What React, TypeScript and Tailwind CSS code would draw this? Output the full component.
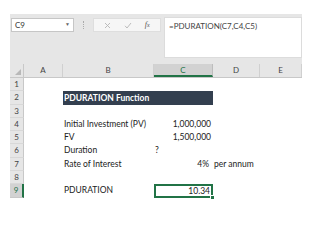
const cols = [
  { name: "A", w: "w-[39px]" },
  { name: "B", w: "w-[91px]" },
  { name: "C", w: "w-[59px]" },
  { name: "D", w: "w-[47px]" },
  { name: "E", w: "w-[42px]" },
];

function Row({ n, children, active }: { n: number; children?: React.ReactNode; active?: boolean }) {
  return (
    <div className="flex h-[13.3px]">
      <div
        className={
          active
            ? "w-[14px] shrink-0 bg-[#d2d2d2] border-r-2 border-[#217346] border-b border-b-[#c8c8c8] text-[8px] leading-[12px] text-center text-[#217346]"
            : "w-[14px] shrink-0 bg-[#e6e6e6] border-r border-[#c8c8c8] border-b border-b-[#d8d8d8] text-[8px] leading-[12px] text-center text-[#444]"
        }
      >
        {n}
      </div>
      <div className="relative flex-1 bg-white whitespace-nowrap">{children}</div>
    </div>
  );
}

export default function App() {
  return (
    <div className="w-[320px] h-[240px] bg-white overflow-hidden pt-[14px] pl-[10px] font-['Lato',sans-serif] text-[#222]">
      <div className="w-[292px] bg-[#e6e6e6]">
        {/* formula bar */}
        <div className="flex items-start h-[50px] pt-[4px]">
          <div className="ml-[1px] w-[63px] h-[14px] bg-white border border-[#c6c6c6] flex items-center justify-between px-[3px]">
            <span className="text-[8px] text-[#333]">C9</span>
            <span className="text-[5px] text-[#666]">▼</span>
          </div>
          <div className="w-[19px] h-[14px] flex items-center justify-center">
            <div className="h-[8px] border-l border-dotted border-[#aaa]" />
          </div>
          <div className="w-[68px] h-[14px] bg-[#f6f6f6] border border-[#dedede] flex items-center justify-around px-[4px]">
            <svg width="7" height="7" viewBox="0 0 7 7">
              <path d="M1 1L6 6M6 1L1 6" stroke="#b5b5b5" strokeWidth="0.9" />
            </svg>
            <svg width="8" height="7" viewBox="0 0 8 7">
              <path d="M1 3.8L3 6L7 1" stroke="#b5b5b5" strokeWidth="0.9" fill="none" />
            </svg>
            <span className="font-['Liberation_Serif',serif] italic text-[8px] text-[#555]">
              f<span className="text-[6px]">x</span>
            </span>
          </div>
          <div className="ml-[3px] flex-1 h-[41px] -mt-[1px] bg-white border border-[#dcdcdc] px-[4px] pt-[2px] text-[8px] text-[#444]">
            =PDURATION(C7,C4,C5)
          </div>
        </div>

        {/* column headers */}
        <div className="flex h-[14px] border-b border-[#c8c8c8]">
          <div className="relative w-[14px] shrink-0 border-r border-[#c8c8c8]">
            <div className="absolute right-[2px] bottom-[2px] w-0 h-0 border-l-[6px] border-l-transparent border-b-[6px] border-b-[#b8b8b8]" />
          </div>
          {cols.map((c) => (
            <div
              key={c.name}
              className={
                c.name === "C"
                  ? `${c.w} shrink-0 bg-[#d2d2d2] border-r border-[#bdbdbd] border-b-2 border-b-[#217346] text-[8px] leading-[13px] text-center text-[#217346]`
                  : `${c.w} shrink-0 border-r border-[#d0d0d0] text-[8px] leading-[13px] text-center text-[#444]`
              }
            >
              {c.name}
            </div>
          ))}
        </div>

        {/* rows */}
        <div className="text-[8.5px] leading-[13px]">
          <Row n={1} />
          <Row n={2}>
            <div className="absolute left-[39px] top-0 w-[150px] h-[14px] bg-[#333f4f] text-white font-bold pl-[1px] text-[8.5px] leading-[14px]">
              PDURATION Function
            </div>
          </Row>
          <Row n={3} />
          <Row n={4}>
            <div className="flex">
              <div className="w-[39px]" />
              <div className="w-[91px] pl-[1px]">Initial Investment (PV)</div>
              <div className="w-[59px] text-right pr-[2px]">1,000,000</div>
            </div>
          </Row>
          <Row n={5}>
            <div className="flex">
              <div className="w-[39px]" />
              <div className="w-[91px] pl-[1px]">FV</div>
              <div className="w-[59px] text-right pr-[2px]">1,500,000</div>
            </div>
          </Row>
          <Row n={6}>
            <div className="flex">
              <div className="w-[39px]" />
              <div className="w-[91px] pl-[1px]">Duration</div>
              <div className="w-[59px] pl-[1px]">?</div>
            </div>
          </Row>
          <Row n={7}>
            <div className="flex">
              <div className="w-[39px]" />
              <div className="w-[91px] pl-[1px]">Rate of Interest</div>
              <div className="w-[59px] text-right pr-[4px]">4%</div>
              <div className="w-[47px] pl-[1px]">per annum</div>
            </div>
          </Row>
          <Row n={8} />
          <Row n={9} active>
            <div className="flex">
              <div className="w-[39px]" />
              <div className="w-[91px] pl-[1px]">PDURATION</div>
              <div className="relative w-[59px] h-[13.3px] border-2 border-[#217346] text-right pr-[1px] leading-[10px]">
                10.34
                <div className="absolute -right-[4px] -bottom-[4px] w-[5px] h-[5px] bg-[#217346] border border-white" />
              </div>
            </div>
          </Row>
        </div>
      </div>
    </div>
  );
}
